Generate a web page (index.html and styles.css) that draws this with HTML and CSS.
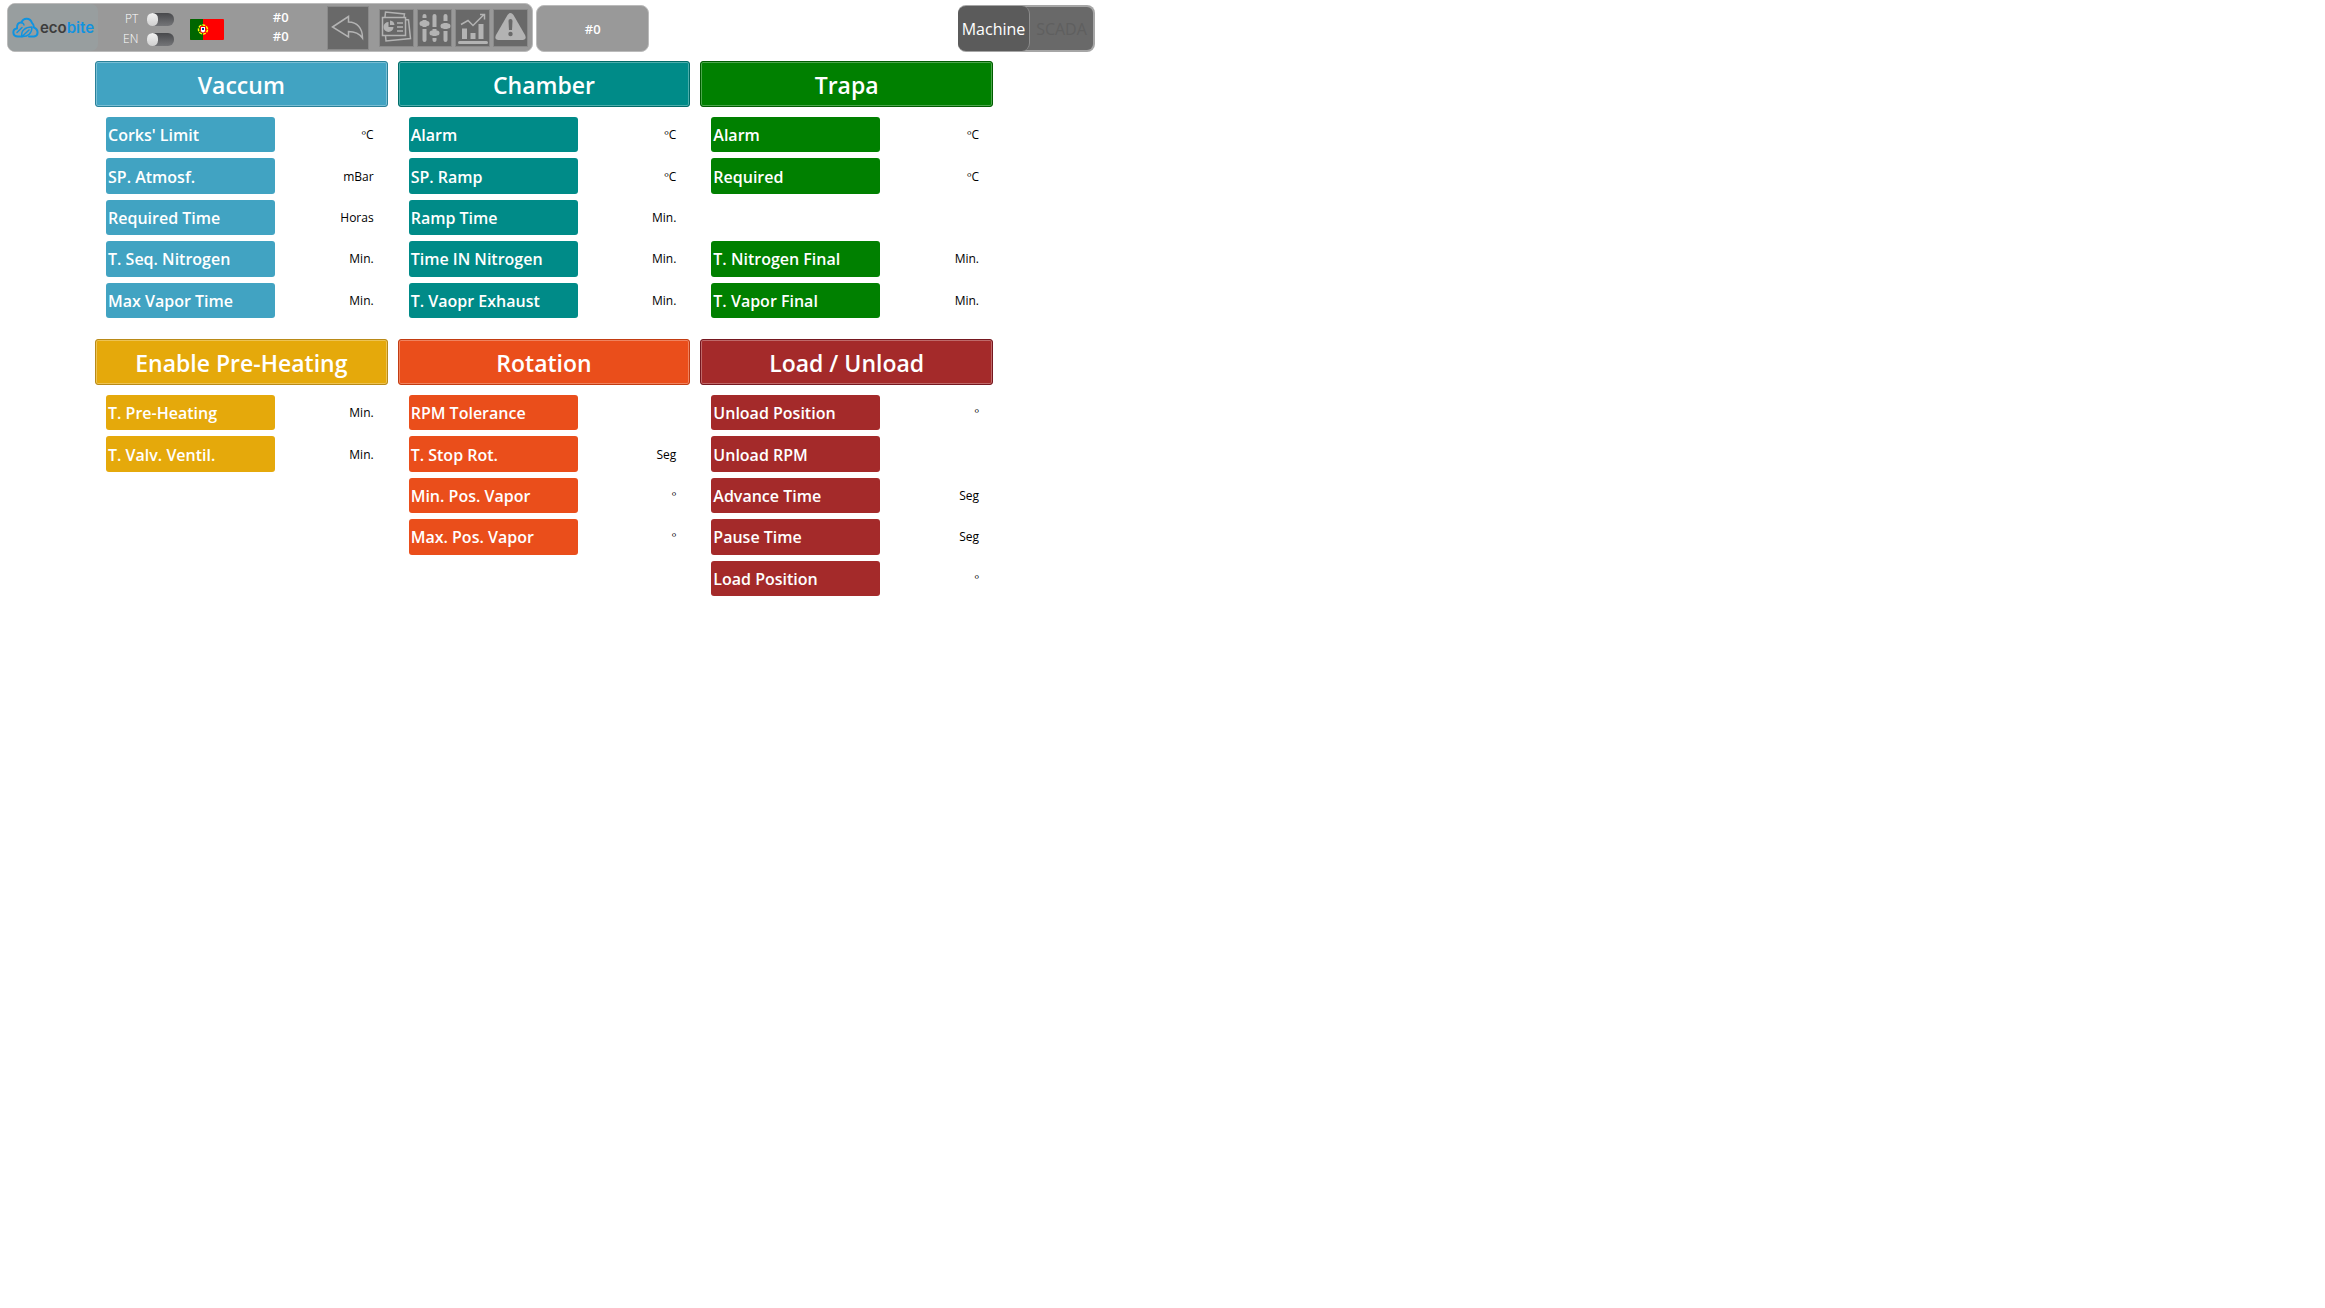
FILE: index.html
```
<!DOCTYPE html>
<html lang="en">
<head>
<meta charset="utf-8">
<title>Ecobite machine parameters</title>
<link rel="stylesheet" href="styles.css">
</head>
<body>
<header class="topbar">
  <div class="toolbar">
    <a class="logo" href="#" aria-label="ecobite">
      <svg class="cloud" width="27" height="22" viewBox="0 0 27 22" fill="none" stroke="#1093e0" stroke-width="2" stroke-linejoin="round" stroke-linecap="round" aria-hidden="true">
        <path d="M10 19.500H6C0 19.500 0 12 5 11.500C4.500 7 7 5 9.500 5.500C11 1 18 0 20 6C21.500 7 22 9 22 10.500C27 13 26.500 19 22 19.500H17"/>
        <path stroke-width="1.500" d="M10 19.500C8.500 14 13 10 20 10C20 16 16 20 10 19.500L17 13M9.500 5.500C11 6 12 7 12 8M5 15.500L10 10.500"/>
      </svg>
      <span class="brand">eco<span class="brand-accent">bite</span></span>
    </a>
    <div class="languages">
      <label class="lang"><span>PT</span><input class="switch" type="checkbox"></label>
      <label class="lang"><span>EN</span><input class="switch" type="checkbox"></label>
    </div>
    <svg class="flag" width="34" height="21" viewBox="0 0 34 21" role="img" aria-label="Portugal">
      <rect width="34" height="21" rx="1" fill="#f00"/>
      <path d="M1 0h12v21H1a1 1 0 0 1-1-1V1a1 1 0 0 1 1-1z" fill="#060"/>
      <circle cx="13" cy="10.500" r="4.500" fill="none" stroke="#ff0" stroke-width="1.500" stroke-dasharray="3 1"/>
      <path d="M10.500 7.500h5v4a2.500 2.500 0 0 1-5 0z" fill="#fff" stroke="#f00"/>
      <path d="M12 9h2v2h-2z" fill="#039"/>
    </svg>
    <div class="counters"><span>#0</span><span>#0</span></div>
    <button class="tool" type="button" aria-label="Back">
      <svg width="40" height="42" viewBox="0 0 40 42" fill="none" stroke="#b3b3b3" stroke-width="1.500" aria-hidden="true">
        <path d="M4.500 20L20.500 9.500V15C29 15 34.500 21 34.500 31C31 26 27 24.500 20.500 24.500V30z"/>
      </svg>
    </button>
    <div class="tools">
      <button class="tool" type="button" aria-label="Reports">
        <svg width="33" height="36" viewBox="0 0 33 36" fill="none" stroke="#b3b3b3" stroke-width="1.500" aria-hidden="true">
          <path d="M2.500 7.500h23v18h-23zM5 7L5.500 2L24.500 4L24 7M26 9.500L28.500 10L30.500 28.500L6 31L5.500 26"/>
          <path d="M8.500 12v5h5a5 5 0 1 1-5-5z" fill="#b3b3b3" stroke="none"/>
          <path d="M10 10.500a5 5 0 0 1 4.500 4.500H10z" fill="#b3b3b3" stroke="none"/>
          <path d="M17 13h6M17 17h6M17 21h6"/>
        </svg>
      </button>
      <button class="tool" type="button" aria-label="Parameters">
        <svg width="33" height="36" viewBox="0 0 33 36" fill="none" stroke="#b3b3b3" stroke-linecap="round" aria-hidden="true">
          <path stroke-width="4" d="M6.500 6v24M16.500 6v24M27.500 6v24"/>
          <path stroke="#696969" stroke-linecap="butt" stroke-width="2" d="M3 18h8M13 18h8M13 27h8M23 20h8M23 12h8M3 9h8"/>
          <path stroke-width="5" d="M4 13.500h5M14 23h5M25 16h5"/>
        </svg>
      </button>
      <button class="tool" type="button" aria-label="Charts">
        <svg width="33" height="36" viewBox="0 0 33 36" fill="none" stroke="#b3b3b3" aria-hidden="true">
          <path stroke-width="1.500" d="M5 14.500L12 10.500L17 15.500L28 4.500M24 4.500h4.500v5"/>
          <path stroke-width="5" d="M8.500 18.500v10.500M17 23v6M25 14v15"/>
          <path stroke-width="3" stroke-linecap="round" d="M3.500 32.500h27"/>
        </svg>
      </button>
      <button class="tool" type="button" aria-label="Alarms">
        <svg width="33" height="36" viewBox="0 0 33 36" aria-hidden="true">
          <path d="M13.500 5Q16.500 1 19.500 5L31 25Q33 29.500 28.500 30H4.500Q0 29.500 2 25z" fill="#b3b3b3"/>
          <path d="M14.500 11a2 2 0 0 1 4 0L18 20h-3z" fill="#696969"/>
          <circle cx="16.500" cy="24" r="2.200" fill="#696969"/>
        </svg>
      </button>
    </div>
  </div>
  <div class="status">#0</div>
  <nav class="tabs" aria-label="View">
    <button class="tab tab-active" type="button">Machine</button>
    <button class="tab" type="button">SCADA</button>
  </nav>
</header>

<main class="board">
  <section class="panel vacuum">
    <h2 class="panel-title">Vaccum</h2>
    <dl class="params">
      <div class="param"><dt>Corks' Limit</dt><dd>ºC</dd></div>
      <div class="param"><dt>SP. Atmosf.</dt><dd>mBar</dd></div>
      <div class="param"><dt>Required Time</dt><dd>Horas</dd></div>
      <div class="param"><dt>T. Seq. Nitrogen</dt><dd>Min.</dd></div>
      <div class="param"><dt>Max Vapor Time</dt><dd>Min.</dd></div>
    </dl>
  </section>
  <section class="panel chamber">
    <h2 class="panel-title">Chamber</h2>
    <dl class="params">
      <div class="param"><dt>Alarm</dt><dd>ºC</dd></div>
      <div class="param"><dt>SP. Ramp</dt><dd>ºC</dd></div>
      <div class="param"><dt>Ramp Time</dt><dd>Min.</dd></div>
      <div class="param"><dt>Time IN Nitrogen</dt><dd>Min.</dd></div>
      <div class="param"><dt>T. Vaopr Exhaust</dt><dd>Min.</dd></div>
    </dl>
  </section>
  <section class="panel trap">
    <h2 class="panel-title">Trapa</h2>
    <dl class="params">
      <div class="param"><dt>Alarm</dt><dd>ºC</dd></div>
      <div class="param"><dt>Required</dt><dd>ºC</dd></div>
      <div class="param param-fourth"><dt>T. Nitrogen Final</dt><dd>Min.</dd></div>
      <div class="param param-fifth"><dt>T. Vapor Final</dt><dd>Min.</dd></div>
    </dl>
  </section>
  <section class="panel heating">
    <h2 class="panel-title">Enable Pre-Heating</h2>
    <dl class="params">
      <div class="param"><dt>T. Pre-Heating</dt><dd>Min.</dd></div>
      <div class="param"><dt>T. Valv. Ventil.</dt><dd>Min.</dd></div>
    </dl>
  </section>
  <section class="panel rotation">
    <h2 class="panel-title">Rotation</h2>
    <dl class="params">
      <div class="param"><dt>RPM Tolerance</dt><dd></dd></div>
      <div class="param"><dt>T. Stop Rot.</dt><dd>Seg</dd></div>
      <div class="param"><dt>Min. Pos. Vapor</dt><dd>º</dd></div>
      <div class="param"><dt>Max. Pos. Vapor</dt><dd>º</dd></div>
    </dl>
  </section>
  <section class="panel loading">
    <h2 class="panel-title">Load / Unload</h2>
    <dl class="params">
      <div class="param"><dt>Unload Position</dt><dd>º</dd></div>
      <div class="param"><dt>Unload RPM</dt><dd></dd></div>
      <div class="param"><dt>Advance Time</dt><dd>Seg</dd></div>
      <div class="param"><dt>Pause Time</dt><dd>Seg</dd></div>
      <div class="param"><dt>Load Position</dt><dd>º</dd></div>
    </dl>
  </section>
</main>
</body>
</html>
```
FILE: styles.css
```
* { box-sizing: border-box; }

body {
  margin: 0;
  background: #fff;
  color: #000;
  font-family: "Open Sans", "Noto Sans", sans-serif;
}

button { font: inherit; padding: 0; border: 0; }

/* Top bar */
.topbar {
  display: flex;
  align-items: flex-end;
  gap: 3px;
  max-width: 1102px;
  padding: 3px 7px 0;
}

.toolbar {
  display: flex;
  align-items: center;
  height: 49px;
  padding-right: 5px;
  border: 1px solid #bbb;
  border-radius: 8px;
  background: #999;
}

.logo {
  display: flex;
  align-items: center;
  align-self: stretch;
  gap: 1px;
  width: 90px;
  padding-left: 4px;
  border-radius: 7px;
  background: #989e9f;
  text-decoration: none;
}

.cloud { flex: none; }

.brand {
  color: #3c3c3c;
  font: 600 15px/20px Inter, sans-serif;
}

.brand-accent { color: #1093e0; }

.languages {
  display: flex;
  flex-direction: column;
  gap: 2px;
  margin-left: 25px;
  padding-top: 3px;
}

.lang {
  display: flex;
  align-items: center;
  justify-content: flex-end;
  gap: 9px;
  color: #fff;
  font-size: 12px;
  font-weight: 300;
  line-height: 18px;
}

.switch {
  appearance: none;
  display: flex;
  width: 27px;
  height: 13px;
  margin: 0;
  border-radius: 6px;
  background: linear-gradient(#48494c, #747578);
}

.switch::before {
  content: "";
  width: 11px;
  height: 13px;
  border-radius: 6px;
  background: linear-gradient(#f2f2f2, #cfcfcf);
}

.switch:checked { justify-content: flex-end; }

.flag { margin: 3px 0 0 16px; }

.counters {
  display: flex;
  flex-direction: column;
  width: 104px;
  color: #fff;
  font-size: 13px;
  font-weight: 600;
  line-height: 19px;
  text-align: center;
  padding: 0 0 2px 9px;
}

.tool {
  display: grid;
  place-items: center;
  background: #696969;
  box-shadow: 0 0 0 1px #8a8a8a;
}

.tools {
  display: flex;
  align-items: center;
  gap: 5px;
  margin-left: 12px;
}

.status {
  display: grid;
  place-items: center;
  width: 113px;
  height: 47px;
  border: 1px solid #bbb;
  border-radius: 8px;
  background: #999;
  color: #fff;
  font-size: 13px;
  font-weight: 600;
}

.tabs {
  display: flex;
  width: 137px;
  height: 47px;
  margin-left: auto;
  border: 2px solid #a6a6a6;
  border-left: 0;
  border-radius: 8px;
  background: #696969;
}

.tab {
  flex: 1;
  background: none;
  color: #5f5f5f;
  font-size: 16px;
}

.tab-active {
  flex: none;
  width: 72px;
  margin: -1px 0;
  border-right: 1px solid #8c8c8c;
  border-radius: 8px;
  background: #5b5b5b;
  color: #fff;
}

/* Parameter panels */
.board {
  display: grid;
  grid-template-columns: repeat(3, 1fr);
  gap: 21px 10px;
  max-width: 993px;
  padding: 9px 0 0 95px;
}

.panel { --tone: #41a3c2; --edge: #2a8199; }
.chamber { --tone: #008b88; --edge: #006b68; }
.trap { --tone: #008000; --edge: #005c00; }
.heating { --tone: #e5a90b; --edge: #b98a18; }
.rotation { --tone: #ea4e1b; --edge: #c23c12; }
.loading { --tone: #a42a2a; --edge: #751820; }

.panel-title {
  margin: 0;
  padding: 8px 0 6px;
  border: 1px solid var(--edge);
  border-radius: 3px;
  background: var(--tone);
  box-shadow: inset 0 0 0 1px #ffffff4d;
  color: #fff;
  font-size: 23px;
  font-weight: 600;
  line-height: 30px;
  text-align: center;
}

.params {
  display: grid;
  grid-template-rows: repeat(5, 1fr);
  gap: 6px;
  height: 201px;
  margin: 10px 14px 0 11px;
}

.param {
  display: flex;
  align-items: center;
  justify-content: space-between;
}

/* The trap has no third parameter, so its last two keep their slots */
.param-fourth { grid-row: 4; }
.param-fifth { grid-row: 5; }

.param dt {
  display: flex;
  align-items: center;
  align-self: stretch;
  width: 169px;
  padding: 1px 0 0 2px;
  border-radius: 3px;
  background: var(--tone);
  color: #fff;
  font-size: 16px;
  font-weight: 600;
}

.param dd {
  margin: 0;
  font-size: 12px;
}
```
